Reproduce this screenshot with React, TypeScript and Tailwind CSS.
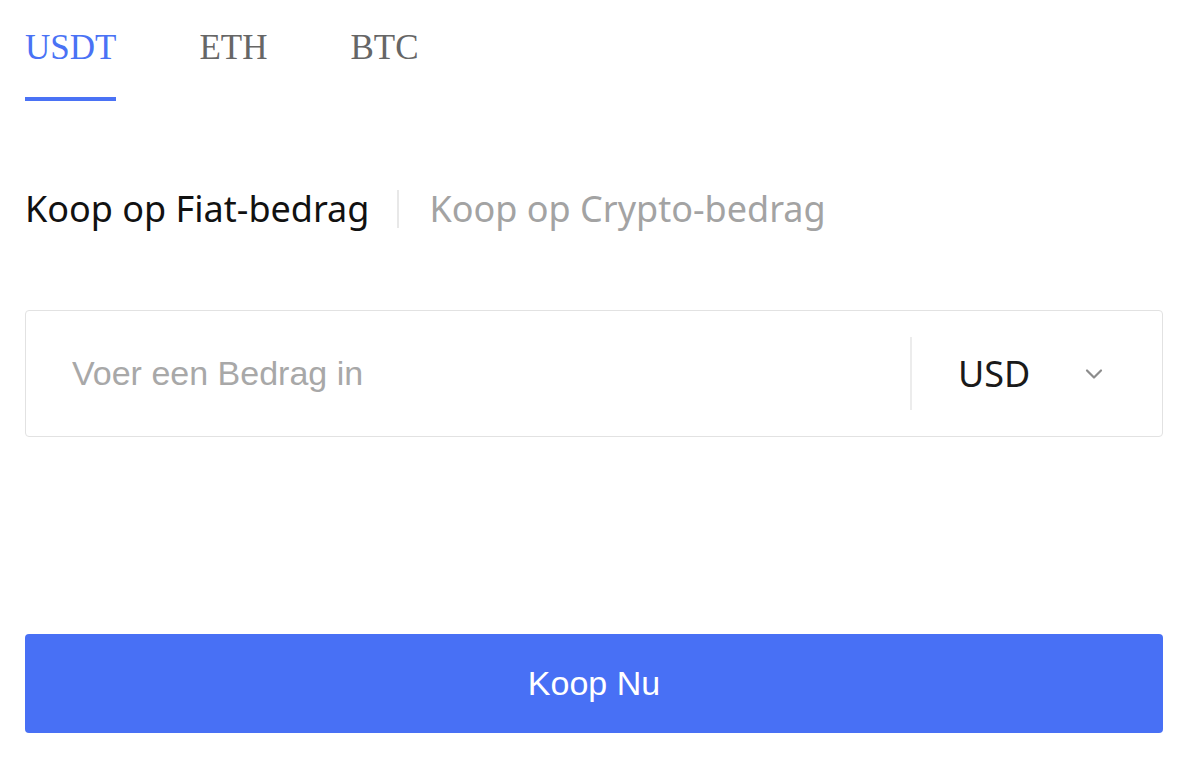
import React, { useState } from 'react';

const tabs = ['USDT', 'ETH', 'BTC'];

export default function App() {
  const [active, setActive] = useState('USDT');
  const [mode, setMode] = useState<'fiat' | 'crypto'>('fiat');

  return (
    <div className="min-h-screen bg-white pl-[25px]">
      <div className="w-[1138px]">
        {/* coin tabs */}
        <div className="flex gap-[83px]">
          {tabs.map((t) => (
            <button
              key={t}
              onClick={() => setActive(t)}
              className="flex flex-col items-stretch pt-[31px]"
            >
              <span
                className={`text-[35px] leading-[34px] font-['Liberation_Serif',serif] ${
                  active === t ? 'text-[#4a72f5]' : 'text-[#666666]'
                }`}
              >
                {t}
              </span>
              <span className={`mt-[32px] h-[4px] ${active === t ? 'bg-[#4a72f5]' : 'bg-transparent'}`} />
            </button>
          ))}
        </div>

        {/* buy mode */}
        <div className="mt-[89px] flex items-center font-['Noto_Sans',sans-serif] text-[36px] leading-[36px]">
          <button
            onClick={() => setMode('fiat')}
            className={mode === 'fiat' ? 'text-[#111111]' : 'text-[#a3a3a3]'}
          >
            Koop op Fiat-bedrag
          </button>
          <span className="ml-[28px] mr-[30px] h-[38px] w-[2px] bg-[#e8e8e8]" />
          <button
            onClick={() => setMode('crypto')}
            className={mode === 'crypto' ? 'text-[#111111]' : 'text-[#a3a3a3]'}
          >
            Koop op Crypto-bedrag
          </button>
        </div>

        {/* amount input */}
        <div className="mt-[82px] flex h-[127px] items-center rounded-[4px] border border-[#e2e2e2]">
          <input
            placeholder="Voer een Bedrag in"
            className="h-full min-w-0 flex-1 bg-transparent pl-[46px] font-['Liberation_Sans',Arial,sans-serif] text-[34px] text-[#333] outline-none placeholder:text-[#a8a8a8]"
          />
          <span className="h-[73px] w-[2px] bg-[#ececec]" />
          <div className="flex w-[250px] items-center pl-[46px] pr-[58px]">
            <span className="flex-1 font-['Noto_Sans',sans-serif] text-[36px] leading-[34px] text-[#1a1a1a]">USD</span>
            <svg width="20" height="12" viewBox="0 0 20 12" fill="none">
              <path d="M3 2.5 L10 9.5 L17 2.5" stroke="#8c8c8c" strokeWidth="2.2" strokeLinecap="round" strokeLinejoin="round" />
            </svg>
          </div>
        </div>

        {/* submit */}
        <button className="mt-[197px] flex h-[99px] w-full items-center justify-center rounded-[4px] bg-[#4870f5] font-['Liberation_Sans',Arial,sans-serif] text-[34px] text-white">
          Koop Nu
        </button>
      </div>
    </div>
  );
}
